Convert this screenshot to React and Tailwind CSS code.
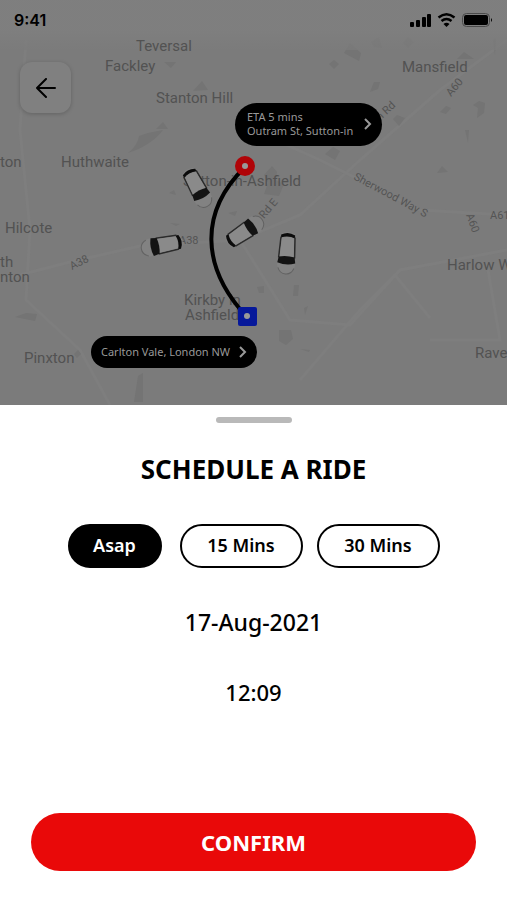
import React, { useState } from 'react';

const places = [
    { name: 'Teversal', x: 136, y: 51 },
    { name: 'Fackley', x: 105, y: 71 },
    { name: 'Stanton Hill', x: 156, y: 103 },
    { name: 'Mansfield', x: 402, y: 72 },
    { name: 'Huthwaite', x: 61, y: 167 },
    { name: 'ton', x: 0, y: 167 },
    { name: 'Sutton-in-Ashfield', x: 183, y: 186 },
    { name: 'Hilcote', x: 5, y: 233 },
    { name: 'th', x: 0, y: 267 },
    { name: 'nton', x: 0, y: 282 },
    { name: 'Kirkby in', x: 184, y: 305 },
    { name: 'Ashfield', x: 185, y: 320 },
    { name: 'Pinxton', x: 24, y: 363 },
    { name: 'Harlow W', x: 447, y: 270 },
    { name: 'Rave', x: 475, y: 358 },
];

const roads = [
    { name: 'n Rd', x: 380, y: 121, angle: -43 },
    { name: 'A60', x: 451, y: 97, angle: -50 },
    { name: 'A38', x: 72, y: 270, angle: -27 },
    { name: 'A38', x: 179, y: 244, angle: 0 },
    { name: 'all Rd E', x: 255, y: 230, angle: -50 },
    { name: 'Sherwood Way S', x: 353, y: 179, angle: 28 },
    { name: 'A60', x: 466, y: 215, angle: 70 },
    { name: 'A61', x: 490, y: 219, angle: 0 },
];

const cars = [
    { x: 197, y: 187, angle: -28 },
    { x: 163, y: 245, angle: 79 },
    { x: 244, y: 232, angle: -124 },
    { x: 287, y: 252, angle: 4 },
];

function Car({ x, y, angle }) {
    return (
        <g transform={`translate(${x} ${y}) rotate(${angle})`}>
            <path d="M-7-18Q0-22 7-18L9 12Q9 22 0 22Q-9 22-9 12Z" fill="#828282" />
            <path d="M-7-17Q0-21 7-17L7-14Q0-17-7-14Z" fill="#0c0c0c" />
            <path d="M-7-15L-8 6M7-15L8 6" fill="none" stroke="#2b2b2b" strokeWidth="1.5" />
            <path d="M-6-14Q0-16 6-14L7 5H-7Z" fill="#8a8a8a" />
            <path d="M-8 5Q0 3 8 5L9 11Q0 14-9 11Z" fill="#131313" />
            <path d="M-8 16Q-6 22 0 22Q6 22 8 16" fill="none" stroke="#626262" />
        </g>
    );
}

function MapView() {
    return (
        <svg className="absolute inset-0 h-full w-full" viewBox="0 0 507 405" preserveAspectRatio="xMidYMin slice" aria-hidden="true">
            <defs>
                <linearGradient id="topFade" x1="0" y1="0" x2="0" y2="1">
                    <stop offset="0" stopColor="#808080" />
                    <stop offset="0.6" stopColor="#808080" />
                    <stop offset="1" stopColor="#7b7b7b" />
                </linearGradient>
            </defs>
            <rect width="507" height="405" fill="#7b7b7b" />

            <g fill="none" stroke="#7e7e7e" strokeWidth="3">
                <path d="M26 40L20 130L30 230L26 300L80 350L110 405" />
                <path d="M0 280L70 262L140 246L240 240L300 215L360 160L440 90L507 40" />
                <path d="M240 240L290 320L350 325L400 270L507 250" />
                <path d="M300 380L360 310L395 275L430 318M430 340H500L488 270" />
                <path d="M253 130L320 160L420 210L507 215" />
            </g>

            <g fill="#747474">
                <path d="M128 153Q138 145 139 136Q150 132 163 130Q152 145 128 153Z" />
                <path d="M193 91L202 81L208 90ZM156 129L163 122L168 129ZM164 62L176 62L171 68Z" />
                <path d="M344 53L350 43L361 53L359 61ZM371 42L379 37L382 48L374 47ZM403 43L408 37L414 42L408 48Z" />
                <path d="M329 64L334 60L339 64L334 69ZM370 92L374 82L380 82L378 89ZM457 59L464 52L474 59Z" />
                <path d="M473 105L479 101L485 103L484 113L477 118L478 108ZM440 112L446 106L451 108L446 114ZM393 119L397 115L405 118L399 126Z" />
                <path d="M437 173L442 166L448 172ZM325 154L333 147L340 151L335 160ZM493 40L496 38L495 55ZM465 130L469 130L468 143Z" />
                <path d="M264 175L272 166L277 172L276 180L284 184L279 196L264 194L268 183Z" />
                <path d="M294 285H299L298 296H293ZM304 308L308 306L305 315ZM279 330L291 330L293 339L286 345L279 341ZM300 349L310 350L309 352Z" />
                <path d="M138 376L143 373V402H134ZM15 317L26 313L37 314L35 321ZM257 287L264 286L264 293L259 293ZM74 354L78 350L81 354L77 358Z" />
                <path d="M169 193L174 190L176 195ZM228 213L237 211L235 216ZM170 223L180 224L176 226Z" />
            </g>
            <rect width="507" height="50" fill="url(#topFade)" fillOpacity="0.7" />

            <g fill="#525252" fontFamily="Roboto, sans-serif" fontSize="15">
                {places.map((p, i) => (
                    <text key={i} x={p.x} y={p.y}>{p.name}</text>
                ))}
            </g>
            <g fill="#545454" fontFamily="Roboto, sans-serif" fontSize="11">
                {roads.map((r, i) => (
                    <text key={i} transform={`translate(${r.x} ${r.y}) rotate(${r.angle})`}>{r.name}</text>
                ))}
            </g>

            <path d="M245 167C199 212 201 267 246 316" fill="none" stroke="#000" strokeWidth="4" />
            {cars.map((c, i) => (
                <Car key={i} {...c} />
            ))}
            <circle cx="245" cy="166" r="10" fill="#b00408" />
            <circle cx="245" cy="166" r="3" fill="#999" />
            <rect x="238" y="307" width="19" height="19" rx="2" fill="#06189a" />
            <circle cx="247" cy="316" r="3" fill="#999" />
        </svg>
    );
}

function StatusBar() {
    return (
        <div className="relative flex h-10 items-center justify-between px-3.5">
            <span className="font-[Inter] text-base font-semibold text-black">9:41</span>
            <svg width="84" height="16" viewBox="0 0 84 16" aria-hidden="true">
                <rect x="1" y="10" width="4" height="5" rx="1" />
                <rect x="7" y="8" width="4" height="7" rx="1" />
                <rect x="13" y="5" width="4" height="10" rx="1" />
                <rect x="18" y="2" width="4" height="13" rx="1" />
                <path d="M29.500 5.500Q37.500-1 45.500 5.500M32.500 9Q37.500 5 42.500 9" fill="none" stroke="#000" strokeWidth="2.500" />
                <path d="M34.500 12Q37.500 9.500 40.500 12L37.500 15Z" />
                <rect x="53.500" y="1.500" width="27" height="13" rx="4" fill="none" stroke="#4a4a4a" />
                <rect x="55" y="3" width="24" height="10" rx="2" />
                <path d="M82 6Q84 8 82 10Z" />
            </svg>
        </div>
    );
}

function Chevron() {
    return (
        <svg width="8" height="12" viewBox="0 0 8 12" fill="none" stroke="#999" strokeWidth="2" aria-hidden="true">
            <path d="M1 1L6 6L1 11" />
        </svg>
    );
}

export default function ScheduleRide() {
    const [slot, setSlot] = useState('Asap');

    const chip = (label, width) => (
        <button
            type="button"
            onClick={() => setSlot(label)}
            className={`h-11 rounded-full border-2 border-black pb-0.5 text-lg font-semibold ${width} ${
                slot === label ? 'bg-black text-white' : 'bg-white text-black'
            }`}
        >
            {label}
        </button>
    );

    return (
        <div className="flex min-h-screen flex-col bg-white font-['Noto_Sans',sans-serif]">
            <header className="relative h-[405px] overflow-hidden bg-[#7b7b7b]">
                <MapView />
                <StatusBar />
                <button
                    type="button"
                    aria-label="Back"
                    className="relative mt-[22px] ml-5 flex size-[51px] items-center justify-center rounded-xl bg-[#808080] shadow-[0_1px_4px_rgba(0,0,0,0.2)]"
                >
                    <svg width="20" height="20" viewBox="0 0 20 20" fill="none" stroke="#000" strokeWidth="2" strokeLinecap="round" strokeLinejoin="round" aria-hidden="true">
                        <path d="M10 1L1 10L10 19M1 10H19" />
                    </svg>
                </button>
                <button
                    type="button"
                    className="absolute top-[103px] left-[235px] flex h-[43px] w-[147px] items-center justify-between rounded-full bg-black pr-2.5 pb-0.5 pl-3 text-left text-[11px] leading-[14px] text-[#999]"
                >
                    <span className="whitespace-nowrap">ETA 5 mins<br />Outram St, Sutton-in</span>
                    <Chevron />
                </button>
                <button
                    type="button"
                    className="absolute top-[336px] left-[91px] flex h-8 w-[166px] items-center justify-between rounded-full bg-black px-2.5 text-[11px] leading-[14px] text-[#999]"
                >
                    <span className="whitespace-nowrap">Carlton Vale, London NW</span>
                    <Chevron />
                </button>
            </header>

            <main className="flex flex-1 flex-col items-center px-[31px] pt-3 pb-[29px] text-black">
                <div className="h-1.5 w-[76px] rounded-full bg-[#b9b9b9]" />
                <h1 className="mt-7 text-[26px] leading-[37px] font-bold">SCHEDULE A RIDE</h1>
                <div className="mt-9 flex gap-4.5">
                    {chip('Asap', 'w-[94px]')}
                    <div className="flex gap-3.5">
                        {chip('15 Mins', 'w-[123px]')}
                        {chip('30 Mins', 'w-[123px]')}
                    </div>
                </div>
                <time className="mt-[39px] text-[23px] leading-[30px] font-medium">17-Aug-2021</time>
                <time className="mt-10 text-[22px] leading-[30px] font-medium">12:09</time>
                <button type="button" className="mt-auto h-[58px] w-full rounded-full bg-[#e90909] text-[22px] font-bold text-white">
                    CONFIRM
                </button>
            </main>
        </div>
    );
}
